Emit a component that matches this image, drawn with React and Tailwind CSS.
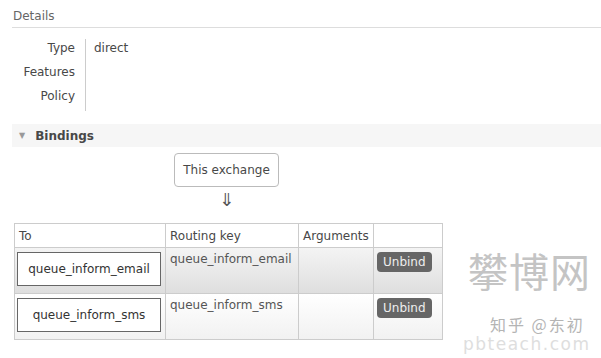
import React from 'react';

const font = { fontFamily: '"DejaVu Sans", Verdana, sans-serif' };

const bindings = [
  { to: 'queue_inform_email', key: 'queue_inform_email', row: 'bg-gradient-to-b from-[#f4f4f4] to-[#dedede]' },
  { to: 'queue_inform_sms', key: 'queue_inform_sms', row: 'bg-gradient-to-b from-white to-[#f1f1f1]' },
];

export default function App() {
  return (
    <div className="relative h-[358px] w-[601px] overflow-hidden bg-white text-[12px] text-[#484848]" style={font}>
      <div className="pl-3 pt-[9px]">
        <div className="border-b border-[#dddddd] pb-[4px] pl-[1px] leading-[14px] text-[#666]">Details</div>

        <div className="mt-[11px] flex">
          <div className="flex w-[73px] flex-col items-end gap-[10px] pr-[10px] pt-[2px] leading-[14px] text-[#484848]">
            <span>Type</span>
            <span>Features</span>
            <span>Policy</span>
          </div>
          <div className="h-[72px] border-l border-[#cccccc] pl-[8px] pt-[2px] leading-[14px]">direct</div>
        </div>

        <div className="mt-[13px] flex h-[23px] items-center bg-[#f6f6f6] pl-[7px]">
          <span className="text-[8px] leading-none text-[#999]">▼</span>
          <span className="ml-[10px] text-[12px] font-bold text-[#484848]">Bindings</span>
        </div>

        <div className="ml-[162px] flex w-[105px] flex-col items-center">
          <div className="mt-[6px] flex h-[34px] w-[105px] items-center justify-center rounded-[4px] border border-[#bbbbbb] text-[#484848]">
            This exchange
          </div>
          <div className="mt-[2px] text-[18px] leading-[22px] text-[#555]">⇓</div>
        </div>

        <table className="ml-[2px] mt-[12px] border-collapse border border-[#cccccc]">
          <thead>
            <tr className="h-[24px]">
              <th className="w-[151px] border border-[#cccccc] px-[4px] text-left font-normal">To</th>
              <th className="w-[133px] border border-[#cccccc] px-[4px] text-left font-normal">Routing key</th>
              <th className="w-[74px] border border-[#cccccc] px-[4px] text-left font-normal">Arguments</th>
              <th className="w-[69px] border border-[#cccccc]"></th>
            </tr>
          </thead>
          <tbody>
            {bindings.map((b) => (
              <tr key={b.to} className={`h-[46px] ${b.row}`}>
                <td className="border border-[#cccccc] px-[2px] align-top">
                  <div className="mt-[4px] flex h-[34px] w-[144px] items-center justify-center border border-[#666] bg-white text-[#333]">
                    {b.to}
                  </div>
                </td>
                <td className="border border-[#cccccc] px-[4px] pt-[4px] align-top leading-[14px] text-[#555]">{b.key}</td>
                <td className="border border-[#cccccc]"></td>
                <td className="border border-[#cccccc] px-[3px] pt-[4px] align-top">
                  <span className="inline-flex h-[20px] w-[55px] items-center justify-center rounded-[4px] bg-[#666666] text-[12px] text-[#eeeeee]">
                    Unbind
                  </span>
                </td>
              </tr>
            ))}
          </tbody>
        </table>
      </div>

      <span className="pointer-events-none absolute left-[468px] top-[246px] text-[40px] leading-[48px] tracking-[1px] text-[#c4c4c4]" style={{ fontFamily: '"Noto Sans CJK SC", sans-serif' }}>攀博网</span>
      <span className="pointer-events-none absolute left-[490px] top-[314px] text-[16px] leading-[20px] tracking-[2px] text-[#b4b4b4]" style={{ fontFamily: '"Noto Sans CJK SC", sans-serif' }}>知乎 @东初</span>
      <span className="pointer-events-none absolute left-[463px] top-[334px] text-[17px] leading-[20px] tracking-[1.5px] text-[#dedede]" style={{ fontFamily: '"DejaVu Sans", sans-serif' }}>pbteach.com</span>
    </div>
  );
}
